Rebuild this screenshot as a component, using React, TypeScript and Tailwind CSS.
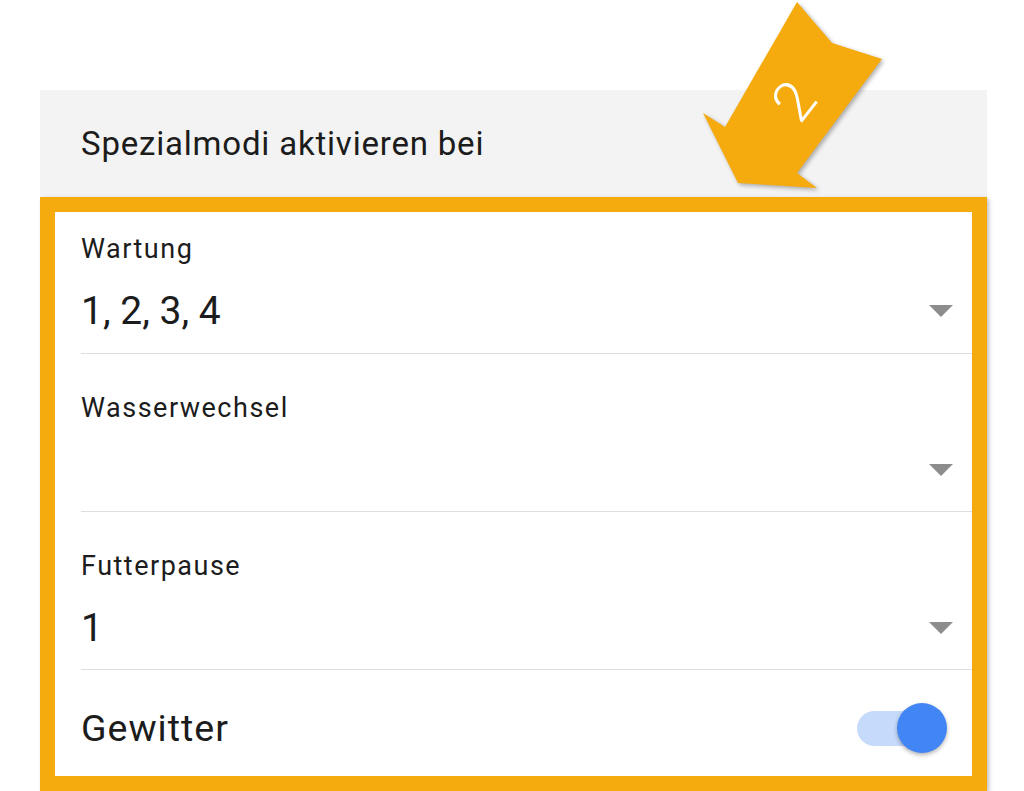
import React from "react";

const Tri = () => (
  <svg width="24" height="12" viewBox="0 0 24 12" className="block">
    <path d="M0 0 L24 0 L12 12 Z" fill="#8d8d8d" />
  </svg>
);

function SelectRow({ label, value, first }: { label: string; value: string; first?: boolean }) {
  return (
    <div
      className={`ml-[26px] flex flex-col border-b border-[#dedede] ${first ? "h-[142px] pt-[21px]" : "h-[158px] pt-[38px]"}`}
    >
      <div className="h-[32px] text-[27px] leading-[32px] tracking-[1.5px] text-[#1c1c1c]">{label}</div>
      <div className="mt-[24px] flex h-[44px] items-center justify-between pr-[19px]">
        <span className="text-[39px] leading-[44px] text-[#1c1c1c]">{value}</span>
        <Tri />
      </div>
    </div>
  );
}

export default function App() {
  return (
    <div
      className="relative h-[791px] w-[1024px] overflow-hidden bg-white"
      style={{ fontFamily: "Roboto, 'Noto Sans', Arial, sans-serif" }}
    >
      <div className="ml-[40px] w-[947px] pt-[90px]">
        <div className="flex h-[107px] items-center bg-[#f3f3f3] pl-[41px]">
          <span className="text-[33px] tracking-[0.8px] text-[#1c1c1c]">Spezialmodi aktivieren bei</span>
        </div>
        <div className="border-[15px] border-[#f5aa0d] bg-white shadow-[2px_2px_4px_rgba(0,0,0,0.25)]">
          <SelectRow label="Wartung" value="1, 2, 3, 4" first />
          <SelectRow label="Wasserwechsel" value="" />
          <SelectRow label="Futterpause" value="1" />
          <div className="ml-[26px] flex h-[106px] items-center justify-between pr-[33px] pt-[10px]">
            <span className="text-[37.5px] tracking-[1px] text-[#1c1c1c]">Gewitter</span>
            <div className="relative h-[35px] w-[82px] rounded-full bg-[#c6dafc]">
              <div className="absolute right-[-8px] top-[-8px] h-[50px] w-[50px] rounded-full bg-[#4285f4] shadow-[0_2px_4px_rgba(0,0,0,0.3)]" />
            </div>
          </div>
        </div>
      </div>

      <svg
        className="absolute left-[690px] top-0"
        width="210"
        height="200"
        viewBox="0 0 210 200"
        style={{ filter: "drop-shadow(2px 2px 2px rgba(0,0,0,0.3))" }}
      >
        <polygon
          points="107,2 142,43 192,59 107,173 127,188 48,183 13,113 35,127"
          fill="#f5aa0d"
        />
        <text
          x="104"
          y="101"
          fill="white"
          fontSize="57"
          fontWeight="300"
          textAnchor="middle"
          dominantBaseline="central"
          transform="rotate(-52 104 101)"
          style={{ fontFamily: "Roboto, sans-serif" }}
        >
          2
        </text>
      </svg>
    </div>
  );
}
